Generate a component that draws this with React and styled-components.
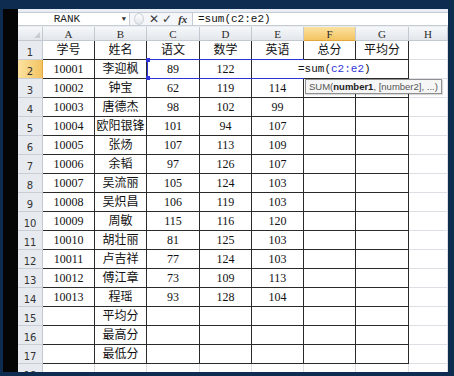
import React from "react";
import styled, { createGlobalStyle } from "styled-components";

const GlobalStyle = createGlobalStyle`
  * {
    margin: 0;
    padding: 0;
    box-sizing: border-box;
  }
  html, body {
    width: 454px;
    height: 376px;
    overflow: hidden;
    background: #0e2c4f;
  }
`;

const Frame = styled.div`
  width: 454px;
  height: 376px;
  display: flex;
  flex-direction: column;
  padding: 9px 6px 4px 3px;
  background: #0e2c4f;
`;

const Inner = styled.div`
  flex: 1;
  display: flex;
  min-height: 0;
`;

const BlackStrip = styled.div`
  width: 15px;
  background: #050505;
`;

const Window = styled.div`
  flex: 1;
  display: flex;
  flex-direction: column;
  background: #e8edf3;
  overflow: hidden;
  position: relative;
`;

const FormulaBar = styled.div`
  display: flex;
  align-items: stretch;
  height: 15px;
  margin-top: 3px;
  background: #f4f6f9;
  border-top: 1px solid #c6ccd4;
  border-bottom: 1px solid #c6ccd4;
`;

const NameBox = styled.div`
  width: 112px;
  display: flex;
  align-items: center;
  background: #fff;
  border-right: 1px solid #c6ccd4;
  font-family: "Liberation Mono", monospace;
  font-size: 11px;
  color: #222;
`;

const NameText = styled.span`
  flex: 1;
  text-align: center;
  padding-right: 6px;
`;

const Arrow = styled.span`
  font-size: 7px;
  color: #333;
  margin-right: 3px;
`;

const Tools = styled.div`
  width: 62px;
  display: flex;
  align-items: center;
  gap: 3px;
  padding-left: 4px;
`;

const Grip = styled.span`
  width: 10px;
  height: 12px;
  border-radius: 50%;
  border: 1px solid #cdd2d8;
  background: linear-gradient(#fbfcfd, #e3e7ec);
  margin-right: 2px;
`;

const ToolGlyph = styled.span`
  font-family: "DejaVu Sans", sans-serif;
  font-size: 12px;
  font-weight: bold;
  color: #3a3a3a;
  line-height: 1;
`;

const Fx = styled.span`
  font-family: "Liberation Serif", serif;
  font-style: italic;
  font-weight: bold;
  font-size: 11px;
  color: #333;
  margin-left: 3px;
`;

const FormulaInput = styled.div`
  flex: 1;
  background: #fff;
  border-left: 1px solid #c6ccd4;
  display: flex;
  align-items: center;
  padding-left: 5px;
  font-family: "Liberation Mono", monospace;
  font-size: 11px;
  color: #111;
`;

const Sheet = styled.div`
  margin-top: 1px;
  display: grid;
  grid-template-columns: 25px 52px 52px 53px 52px 52px 52px 53px 1fr;
  grid-template-rows: 14px repeat(18, 19px);
  background: #fff;
  position: relative;
`;

const Corner = styled.div`
  background: linear-gradient(#f6f8fa, #e2e6eb);
  border-right: 1px solid #c3c9d1;
  border-bottom: 1px solid #c3c9d1;
  position: relative;
  &::after {
    content: "";
    position: absolute;
    right: 2px;
    bottom: 2px;
    border-left: 6px solid transparent;
    border-bottom: 6px solid #c9ced5;
  }
`;

const ColHead = styled.div`
  display: flex;
  align-items: center;
  justify-content: center;
  font-family: "Liberation Serif", serif;
  font-size: 11px;
  color: #2c2c2c;
  background: ${({ $sel }) =>
    $sel
      ? "linear-gradient(#fbe2a0, #f3c462)"
      : "linear-gradient(#f6f8fa, #e2e6eb)"};
  border-right: 1px solid #c3c9d1;
  border-bottom: 1px solid ${({ $sel }) => ($sel ? "#e1a73c" : "#c3c9d1")};
`;

const RowHead = styled.div`
  display: flex;
  align-items: flex-end;
  justify-content: center;
  padding-bottom: 1px;
  font-family: "DejaVu Sans", sans-serif;
  font-size: 10px;
  color: #333;
  background: ${({ $sel }) =>
    $sel ? "linear-gradient(90deg, #fbe2a0, #f3c462)" : "#e7ebf0"};
  border-right: 1px solid ${({ $sel }) => ($sel ? "#e1a73c" : "#c3c9d1")};
  border-bottom: 1px solid #c9ced6;
`;

const Cell = styled.div`
  display: flex;
  align-items: center;
  justify-content: center;
  line-height: 1;
  font-family: "Liberation Serif", "Noto Sans CJK SC", serif;
  font-size: 12px;
  color: #111;
  white-space: nowrap;
  overflow: hidden;
  border-right: 1px solid ${({ $boxed }) => ($boxed ? "#2a2a2a" : "#dcdfe3")};
  border-bottom: 1px solid ${({ $boxed }) => ($boxed ? "#2a2a2a" : "#dcdfe3")};
`;

const Range = styled.div`
  position: absolute;
  left: 129px;
  top: 32px;
  width: 157px;
  height: 20px;
  border: 1px solid #2f34d6;
  pointer-events: none;
`;

const Handle = styled.span`
  position: absolute;
  width: 4px;
  height: 4px;
  background: #2f34d6;
  left: -2px;
  top: ${({ $bottom }) => ($bottom ? "auto" : "-2px")};
  bottom: ${({ $bottom }) => ($bottom ? "-2px" : "auto")};
`;

const EditBox = styled.div`
  position: absolute;
  left: 279px;
  top: 33px;
  width: 67px;
  height: 18px;
  background: #fff;
  display: flex;
  align-items: center;
  padding-left: 1px;
  font-family: "Liberation Mono", monospace;
  font-size: 11px;
  color: #111;
`;

const Ref = styled.span`
  color: #2f34d6;
`;

const Tip = styled.div`
  position: absolute;
  left: 287px;
  top: 52px;
  padding: 1px 3px;
  background: #f6f6f6;
  border: 1px solid #8f8f8f;
  box-shadow: 1px 1px 1px rgba(0, 0, 0, 0.15);
  font-family: "Liberation Sans", sans-serif;
  font-size: 9.5px;
  color: #555;
  white-space: nowrap;
`;

const Bold = styled.b`
  color: #222;
`;

const cols = ["A", "B", "C", "D", "E", "F", "G", "H"];

const rows = [
  ["学号", "姓名", "语文", "数学", "英语", "总分", "平均分"],
  ["10001", "李迎枫", "89", "122", "", "", ""],
  ["10002", "钟宝", "62", "119", "114", "", ""],
  ["10003", "唐德杰", "98", "102", "99", "", ""],
  ["10004", "欧阳银锋", "101", "94", "107", "", ""],
  ["10005", "张炀", "107", "113", "109", "", ""],
  ["10006", "余韬", "97", "126", "107", "", ""],
  ["10007", "吴流丽", "105", "124", "103", "", ""],
  ["10008", "吴炽昌", "106", "119", "103", "", ""],
  ["10009", "周敏", "115", "116", "120", "", ""],
  ["10010", "胡壮丽", "81", "125", "103", "", ""],
  ["10011", "卢吉祥", "77", "124", "103", "", ""],
  ["10012", "傅江章", "73", "109", "113", "", ""],
  ["10013", "程瑶", "93", "128", "104", "", ""],
  ["", "平均分", "", "", "", "", ""],
  ["", "最高分", "", "", "", "", ""],
  ["", "最低分", "", "", "", "", ""],
  ["", "", "", "", "", "", ""],
];

const App = () => {
  return (
    <>
      <GlobalStyle />
      <Frame>
        <Inner>
          <BlackStrip />
          <Window>
            <FormulaBar>
              <NameBox>
                <NameText>RANK</NameText>
                <Arrow>▼</Arrow>
              </NameBox>
              <Tools>
                <Grip />
                <ToolGlyph>✕</ToolGlyph>
                <ToolGlyph>✓</ToolGlyph>
                <Fx>fx</Fx>
              </Tools>
              <FormulaInput>=sum(c2:e2)</FormulaInput>
            </FormulaBar>
            <Sheet>
              <Corner />
              {cols.map((c) => (
                <ColHead key={c} $sel={c === "F"}>
                  {c}
                </ColHead>
              ))}
              {rows.map((r, i) => (
                <React.Fragment key={i}>
                  <RowHead $sel={i === 1}>{i + 1}</RowHead>
                  {r.map((v, j) => (
                    <Cell key={j} $boxed={i < 17}>
                      {v}
                    </Cell>
                  ))}
                  <Cell />
                </React.Fragment>
              ))}
              <Range>
                <Handle />
                <Handle $bottom />
              </Range>
              <EditBox>
                =sum(<Ref>c2:e2</Ref>)
              </EditBox>
              <Tip>
                SUM(<Bold>number1</Bold>, [number2], ...)
              </Tip>
            </Sheet>
          </Window>
        </Inner>
      </Frame>
    </>
  );
};

export default App;
